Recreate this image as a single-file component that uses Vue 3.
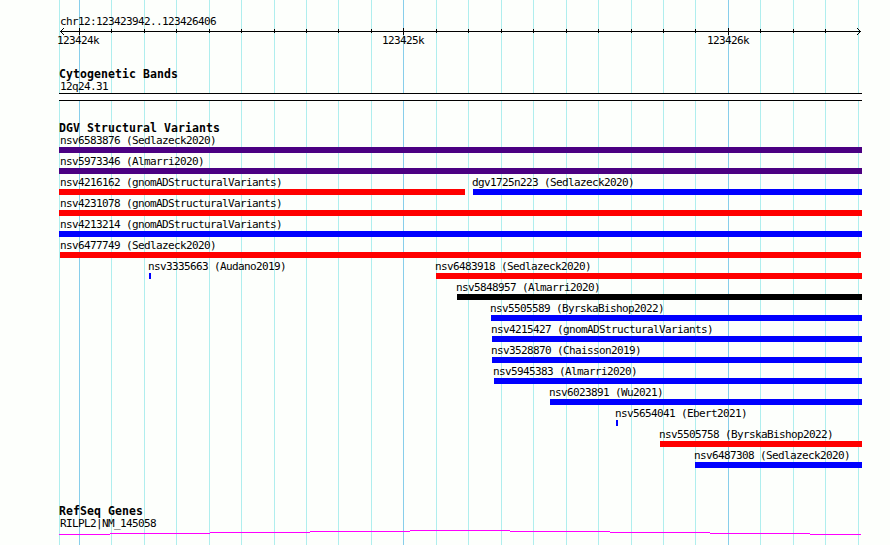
<script setup>
import { computed } from 'vue';

const LEFT = 59;
const RIGHT = 862;

const majorLines = [79, 403, 728];
const minorLines = [
  59, 111, 144, 176, 209, 241, 274, 306, 338, 371, 436, 468, 501, 533,
  566, 598, 631, 663, 695, 760, 793, 825, 858,
];

const minorTicks = computed(() => minorLines.filter((x) => x > 60 && x < 850));

const scaleLabels = ['123424k', '123425k', '123426k'];

const rows = [
  [{ name: 'nsv6583876', study: 'Sedlazeck2020', start: 59, end: 862, type: 'complex' }],
  [{ name: 'nsv5973346', study: 'Almarri2020', start: 59, end: 862, type: 'complex' }],
  [
    { name: 'nsv4216162', study: 'gnomADStructuralVariants', start: 59, end: 465, type: 'loss' },
    { name: 'dgv1725n223', study: 'Sedlazeck2020', start: 473, end: 862, type: 'gain' },
  ],
  [{ name: 'nsv4231078', study: 'gnomADStructuralVariants', start: 59, end: 862, type: 'loss' }],
  [{ name: 'nsv4213214', study: 'gnomADStructuralVariants', start: 59, end: 862, type: 'gain' }],
  [{ name: 'nsv6477749', study: 'Sedlazeck2020', start: 60, end: 861, type: 'loss' }],
  [
    { name: 'nsv3335663', study: 'Audano2019', start: 149, end: 151, type: 'gain' },
    { name: 'nsv6483918', study: 'Sedlazeck2020', start: 436, end: 862, type: 'loss' },
  ],
  [{ name: 'nsv5848957', study: 'Almarri2020', start: 457, end: 862, type: 'other' }],
  [{ name: 'nsv5505589', study: 'ByrskaBishop2022', start: 491, end: 862, type: 'gain' }],
  [{ name: 'nsv4215427', study: 'gnomADStructuralVariants', start: 492, end: 862, type: 'gain' }],
  [{ name: 'nsv3528870', study: 'Chaisson2019', start: 492, end: 862, type: 'gain' }],
  [{ name: 'nsv5945383', study: 'Almarri2020', start: 494, end: 862, type: 'gain' }],
  [{ name: 'nsv6023891', study: 'Wu2021', start: 550, end: 862, type: 'gain' }],
  [{ name: 'nsv5654041', study: 'Ebert2021', start: 616, end: 618, type: 'gain' }],
  [{ name: 'nsv5505758', study: 'ByrskaBishop2022', start: 660, end: 862, type: 'loss' }],
  [{ name: 'nsv6487308', study: 'Sedlazeck2020', start: 695, end: 862, type: 'gain' }],
];

const featureStyle = (row, i) => {
  const prevEnd = i === 0 ? LEFT : row[i - 1].end;
  return {
    marginLeft: `${row[i].start - prevEnd}px`,
    width: `${row[i].end - row[i].start}px`,
  };
};

// intron hat of the gene, one pixel per step
const geneSteps = [
  [59, 110, 4], [110, 210, 3], [210, 310, 2], [310, 410, 1], [410, 510, 0],
  [510, 610, 1], [610, 710, 2], [710, 810, 3], [810, 861, 4],
];
</script>

<template>
  <div class="browser">
    <svg class="grid" width="890" height="545" shape-rendering="crispEdges">
      <rect v-for="x in minorLines" :key="x" class="minor" :x="x" y="0" width="1" height="545" />
      <rect v-for="x in majorLines" :key="x" class="major" :x="x" y="0" width="1" height="545" />
    </svg>

    <div class="tracks">
      <section class="overview">
        <div class="label">chr12:123423942..123426406</div>
        <svg class="ruler" width="803" height="9" viewBox="59 27 803 9" shape-rendering="crispEdges">
          <rect x="60" y="31" width="801" height="1" />
          <rect v-for="x in minorTicks" :key="x" :x="x" y="29" width="1" height="4" />
          <rect v-for="x in majorLines" :key="x" :x="x" y="28" width="1" height="7" />
          <path d="M61 30h1v-1h1v-1h1v1h-1v1h-1v1h-1zM61 32h1v1h1v1h1v1h-1v-1h-1v-1h-1z" />
          <path d="M860 30h-1v-1h-1v-1h-1v1h1v1h1v1h1zM860 32h-1v1h-1v1h-1v1h1v-1h1v-1h1z" />
        </svg>
        <div class="scale">
          <span v-for="text in scaleLabels" :key="text" class="label">{{ text }}</span>
        </div>
      </section>

      <section class="cytoband">
        <h2 class="title">Cytogenetic Bands</h2>
        <div class="label">12q24.31</div>
        <div class="band"></div>
      </section>

      <section class="variants">
        <h2 class="title">DGV Structural Variants</h2>
        <div v-for="(row, r) in rows" :key="r" class="row">
          <div
            v-for="(f, i) in row"
            :key="f.name"
            class="feature"
            :class="{ edge: f.start === LEFT, near: f.start === LEFT + 1 }"
            :style="featureStyle(row, i)"
          >
            <div class="label">{{ f.name }} ({{ f.study }})</div>
            <div class="bar" :class="f.type"></div>
          </div>
        </div>
      </section>

      <section class="genes">
        <h2 class="title">RefSeq Genes</h2>
        <div class="label">RILPL2|NM_145058</div>
        <svg class="gene" :width="RIGHT - LEFT" height="5" viewBox="59 0 803 5" shape-rendering="crispEdges">
          <rect v-for="s in geneSteps" :key="s[0]" :x="s[0]" :y="s[2]" :width="s[1] - s[0]" height="1" />
        </svg>
      </section>
    </div>
  </div>
</template>

<style scoped>
.browser {
  position: relative;
  width: 890px;
  height: 545px;
  overflow: hidden;
  background: #fdfffc;
  color: #000;
}

.grid {
  position: absolute;
  top: 0;
  left: 0;
}

.minor {
  fill: #afeeee;
}

.major {
  fill: #87ceeb;
}

.tracks {
  position: relative;
  display: flex;
  flex-direction: column;
  width: 803px;
  padding: 15px 0 0 59px;
}

.label {
  height: 12px;
  padding-left: 1px;
  font-family: "DejaVu Sans Mono", monospace;
  font-size: 11px;
  line-height: 14px;
  letter-spacing: -0.62px;
  white-space: pre;
}

.title {
  height: 12px;
  margin: 0;
  font-family: "DejaVu Sans Mono", monospace;
  font-size: 11.5px;
  font-weight: bold;
  line-height: 12px;
  letter-spacing: 0.08px;
  white-space: pre;
}

.overview {
  height: 53px;
}

.ruler {
  display: block;
}

.scale {
  display: flex;
  gap: 282px;
  margin: -2px 0 0 -3px;
}

.scale .label {
  width: 42px;
  padding-left: 1px;
}

.cytoband {
  height: 54px;
}

.band {
  height: 6px;
  margin-top: 1px;
  border-top: 1px solid #000;
  border-bottom: 1px solid #000;
  background: #fff;
}

.variants {
  height: 383px;
}

.variants .title {
  margin-bottom: -2px;
}

.row {
  display: flex;
  height: 21px;
}

.feature {
  flex: none;
}

.feature .label {
  height: 15px;
  padding-left: 0;
  margin-left: -1px;
  line-height: 18px;
}

.feature.edge .label {
  margin-left: 1px;
}

.feature.near .label {
  margin-left: 0;
}

.bar {
  height: 6px;
}

.complex {
  background: #4b0082;
}

.loss {
  background: #f00;
}

.gain {
  background: #00f;
}

.other {
  background: #000;
}

.gene {
  display: block;
  margin-top: 1px;
  fill: #f0f;
}
</style>

<style>
body {
  margin: 0;
  overflow: hidden;
  background: #fdfffc;
}
</style>
